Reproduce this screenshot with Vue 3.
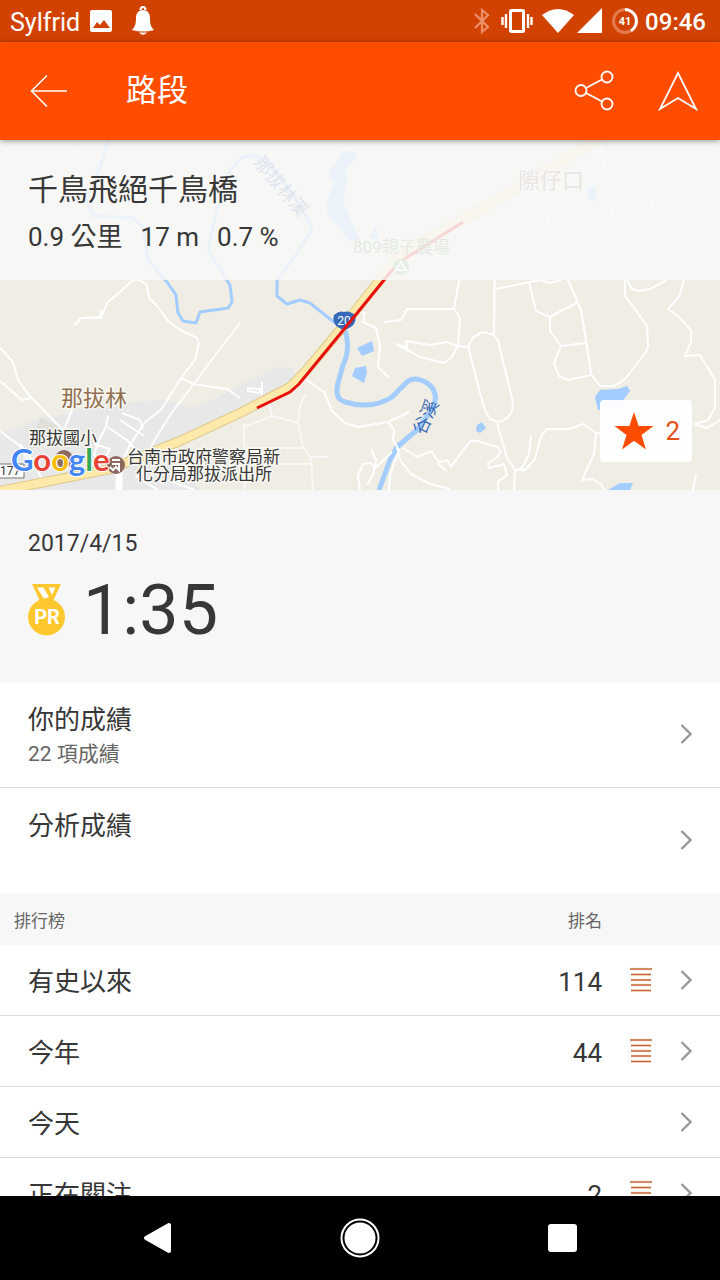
<script setup>
const leaderboard = [
  { name: '有史以來', rank: '114' },
  { name: '今年', rank: '44' },
  { name: '今天', rank: '' },
  { name: '正在關注', rank: '2' },
]

const results = [
  { title: '你的成績', note: '22 項成績' },
  { title: '分析成績', note: '' },
]

const roads = [
  'M78 322 L80 318 L101 318 L107 303 L121 291 L133 280 L140 280 L147 285 L149 298 L158 307 L168 321 L180 330 L197 338 L199 343 L195 360 L181 378 L161 410 L145 422 L130 445 L122 462',
  'M101 310 L100 317 L81 318 L75 325',
  'M0 348 L13 362 L18 380 L28 394 L60 427 L73 440',
  'M0 381 L22 400 L32 398',
  'M240 323 L213 358 L193 385 L170 415 L150 448 L143 462',
  'M181 378 L193 384 L227 389 L240 398',
  'M72 410 L62 434 L66 445',
  'M108 416 L106 427 L99 440 L94 455 L104 462',
  'M122 413 L140 420 L143 429',
  'M106 426 L128 441 L136 450',
  'M120 420 L144 436',
  'M94 444 L110 449 L104 460',
  'M20 444 L32 460 L45 485',
  'M0 431 L20 446 L33 470',
  'M136 476 L158 490',
  'M170 481 L195 490',
  'M304 378 L324 392 L332 411 L345 423 L358 427 L388 422 L409 412',
  'M388 422 L394 430 L393 440 L399 450 L390 475 L389 490',
  'M397 447 L400 460 L411 474 L430 484 L450 489',
  'M403 448 L417 457 L431 451 L439 462 L447 460 L451 467 L464 449 L471 441 L480 441',
  'M437 463 L447 471',
  'M371 449 L376 460 L373 475 L367 485',
  'M360 490 L358 476 L363 464 L371 463 L375 468 L392 452',
  'M360 311 L365 313 L363 322 L376 328 L380 346 L378 367 L389 378',
  'M384 322 L401 320 L407 309 L454 309 L460 318 L458 345 L452 357 L444 363 L420 357 L397 344 L407 348 L406 341 L430 345 L447 342 L458 346 L468 347 L473 337 L480 334',
  'M468 346 L480 393 L485 410 L490 419 L499 422 L506 419 L512 412 L513 402 L498 341 L494 335 L482 332 L472 338',
  'M396 344 L409 351',
  'M454 309 L459 281 L458 256',
  'M494 335 L495 245 L490 230 L483 216',
  'M496 289 L530 282 L540 280 L550 283 L561 280',
  'M529 282 L536 311 L550 317 L550 331 L561 346 L586 343',
  'M550 317 L578 302',
  'M568 280 L581 310 L587 346 L591 374 L600 386 L614 386 L625 379 L646 352 L648 346 L647 326 L637 312 L625 296 L625 280',
  'M627 280 L632 289 L638 291 L650 289 L667 280',
  'M684 280 L679 297 L668 309 L679 317 L691 330 L691 342 L685 356 L700 355 L715 380 L715 408 L708 420 L695 424 L707 428 L720 420',
  'M561 346 L554 363 L559 376 L568 380 L591 375',
  'M497 423 L507 458 L515 470 L525 470 L535 459 L541 436 L547 429 L570 429 L583 424 L596 433 L634 432 L652 412 L692 424',
  'M596 433 L594 454 L582 480 L592 479 L601 484 L604 490',
  'M515 470 L514 490',
  'M531 435 L529 454 L522 468 L515 470',
  'M480 442 L498 447 L501 452 L496 458 L488 463 L489 468 L504 464 L507 475 L498 482 L498 490',
  'M696 474 L693 490',
  'M0 175 L20 173 L60 165 L78 150',
  'M375 174 L397 172 L416 162 L445 165 L453 142',
  'M0 165 L12 142',
  'M493 155 L516 170 L535 190 L547 205 L577 202 L590 185 L605 175 L600 145',
  'M480 180 L515 168',
  'M547 205 L548 226 L560 222',
  'M593 202 L595 240 L600 250 L617 244',
  'M568 278 L600 252 L617 244',
  'M602 142 L610 200 L617 244 L627 280',
  'M612 200 L646 184 L655 180 L680 190 L694 203 L720 225',
  'M649 184 L654 222 L651 230 L660 250 L670 275',
  'M654 222 L677 233 L694 203',
  'M677 233 L697 255 L697 265 L684 280',
  'M617 226 L652 226',
  'M625 265 L660 250',
  'M610 145 L620 156 L647 154 L656 178 L680 180 L690 175 L720 172',
]

const lanes = [
  'M244 424 L245 490',
  'M244 427 L272 416 L298 423 L300 405 L306 394',
  'M272 416 L269 404',
  'M298 423 L303 447 L311 458 L313 490',
  'M245 448 L303 448',
  'M245 464 L311 464',
  'M311 457 L328 457',
]
</script>

<template>
  <div class="screen">
    <header class="status">
      <span class="carrier">Sylfrid</span>
      <svg class="picture" width="24" height="24" viewBox="0 0 24 24">
        <rect x="1" y="1" width="22" height="22" rx="2" fill="#fff" />
        <path d="M4 19 L8 13 L11 16 L15 11 L21 19 Z" fill="#d14200" />
      </svg>
      <svg class="bell" width="24" height="30" viewBox="0 0 24 30">
        <path d="M9.500 4 a2.500 3 0 0 1 5 0" fill="none" stroke="#fff" stroke-width="2" />
        <path d="M12 4 C7 4 5 8 5 12 C5 18 4 21 1 24 Q12 27 23 24 C20 21 19 18 19 12 C19 8 17 4 12 4 Z M8 26.500 H16 Q12 31 8 26.500 Z" fill="#fff" />
      </svg>
      <span class="grow"></span>
      <svg width="18" height="28" viewBox="0 0 18 28">
        <path d="M2 7 L15 20 L9 25 V3 L15 8 L2 21" fill="none" stroke="#ec9069" stroke-width="2.200" />
      </svg>
      <svg class="vibrate" width="32" height="26" viewBox="0 0 32 26">
        <rect x="9.500" y="2.500" width="13" height="21" rx="1" fill="none" stroke="#fff" stroke-width="3" />
        <path d="M5 6 V20 M27 6 V20 M1.500 9 V17 M30.500 9 V17" stroke="#fff" stroke-width="2.400" />
      </svg>
      <svg class="wifi" width="32" height="26" viewBox="0 0 32 26">
        <path d="M0 7 Q16 -5 32 7 L16 25 Z" fill="#fff" />
      </svg>
      <svg width="26" height="26" viewBox="0 0 26 26">
        <path d="M0 25 L25 0 V25 Z" fill="#fff" />
      </svg>
      <svg class="battery" width="28" height="28" viewBox="0 0 28 28">
        <circle cx="14" cy="14" r="11.500" fill="none" stroke="#e57a4d" stroke-width="3" />
        <path d="M14 2.500 A11.500 11.500 0 0 1 20 23.800" fill="none" stroke="#fff" stroke-width="3" />
        <text x="14" y="18" text-anchor="middle" fill="#fff" font-size="11" font-weight="700">41</text>
      </svg>
      <time class="clock">09:46</time>
    </header>

    <nav class="appbar">
      <button class="icon-button" type="button" aria-label="返回">
        <svg width="38" height="34" viewBox="0 0 38 34">
          <path d="M37 17 H1.500 M17 1.500 L1.500 17 L17 32.500" fill="none" stroke="#fff" stroke-width="1.500" />
        </svg>
      </button>
      <h1>路段</h1>
      <button class="icon-button" type="button" aria-label="分享">
        <svg width="40" height="42" viewBox="0 0 40 42" fill="none" stroke="#fff" stroke-width="1.800">
          <circle cx="7" cy="20.500" r="5.500" />
          <circle cx="33" cy="7" r="5.500" />
          <circle cx="33" cy="34" r="5.500" />
          <path d="M12 18 L28 9.500 M12 23 L28 31.500" />
        </svg>
      </button>
      <button class="icon-button" type="button" aria-label="導航">
        <svg width="40" height="42" viewBox="0 0 40 42">
          <path d="M20 3 L38 39 L20 28 L2 39 Z" fill="none" stroke="#fff" stroke-width="1.800" />
        </svg>
      </button>
    </nav>

    <main>
      <section class="map">
        <svg class="tiles" viewBox="0 140 720 350" preserveAspectRatio="xMidYMid slice">
          <rect y="140" width="720" height="350" fill="#efede4" />
          <path d="M0 432 L18 428 L40 417 L67 414 L93 402 L120 403 L167 400 L190 408 L213 400 L240 385 L277 367 L293 368 L297 378 L240 418 L170 450 L200 490 H0 Z" fill="#e8e8e8" />
          <path d="M40 417 L66 430 L62 443 L34 435 Z" fill="#e0e0d8" />
          <g fill="none" stroke="#f8f8f7" stroke-width="2" stroke-linejoin="round">
            <path v-for="d in lanes" :key="d" :d="d" />
          </g>
          <g fill="none" stroke="#a3ccff" stroke-linejoin="round">
            <path d="M108 140 L100 167 L86 200 L93 216 L133 218 L143 227 L148 260 L167 282 L176 295 L178 313 L183 321 L196 323 L200 312 L228 308 L232 302 L230 285 L208 250 L217 210 L230 170 L242 157 L256 155 L280 175 L303 210 L312 230 L297 253 L277 281 L277 296 L287 304 L300 300 L310 303 L335 323" stroke-width="3" />
            <path d="M345 330 Q351 349 343 365 L338 383 Q334 399 345 402 Q372 410 392 397 L408 381 Q416 376 427 383 Q440 392 433 408 L417 430 L397 447 L390 460 L379 490" stroke-width="5" />
          </g>
          <g fill="#a3ccff">
            <path d="M343 150 L357 153 L352 163 L346 168 L347 180 L343 203 L360 240 L350 242 L327 213 L327 200 L335 183 L328 173 L337 163 Z" />
            <path d="M369 238 L376 226 L379 240 Z" />
            <path d="M587 188 L595 186 L597 201 L588 200 Z" />
            <path d="M357 348 L372 341 L374 351 L362 356 Z M355 368 L366 366 L367 372 L364 383 L352 376 Z M477 425 L482 422 L486 428 L480 433 L476 431 Z M595 397 L600 390 L618 389 L627 386 L630 391 L622 402 L626 408 L598 410 Z M608 490 L620 483 L633 483 L630 490 Z" />
          </g>
          <g fill="none" stroke="#fff" stroke-width="2" stroke-linejoin="round">
            <path v-for="d in roads" :key="d" :d="d" />
            <path d="M248 388 L260 389 L260 393 L248 391 Z M262 382 V396" />
          </g>
          <path d="M119 468 V490" stroke="#fff" stroke-width="7" />
          <g fill="none" stroke-linejoin="round">
            <path d="M-6 492 L40 483 L110 469 L180 441 L240 413 L290 387 L305 372 L340 330 L379 281 L394 261 L423 241 L480 210 L600 138" stroke="#dfc98c" stroke-width="10" />
            <path d="M-6 492 L40 483 L110 469 L180 441 L240 413 L290 387 L305 372 L340 330 L379 281 L394 261 L423 241 L480 210 L600 138" stroke="#fde9a9" stroke-width="8" />
          </g>
          <path d="M334 315 Q339 310 344 312 Q349 310 355 315 Q358 326 344 330 Q331 326 334 315 Z" fill="#3569b8" />
          <text x="344" y="325" class="shield" text-anchor="middle">20</text>
          <path d="M257 408 L290 392 L299 384 L345 328 L384 280 L398 263 L463 222" fill="none" stroke="#e8100d" stroke-width="3" />
          <circle cx="401" cy="267" r="8" fill="#7bb573" />
          <path d="M401 262 L406 270 H396 Z" fill="none" stroke="#fff" stroke-width="2" />
          <text x="353" y="253" class="farm">809親子農場</text>
          <text x="518" y="188" class="label town">隙仔口</text>
          <text class="river" transform="translate(253 163) rotate(50)">那拔林溪</text>
          <text class="river" transform="translate(424 436) rotate(-65)">谷溪</text>
          <text x="61" y="406" class="label town">那拔林</text>
          <text x="29" y="444" class="label place">那拔國小</text>
          <path d="M-2 464 H24 V478 H-2 Z" fill="#fff" stroke="#777" />
          <text x="0" y="475" font-size="12" fill="#333">177</text>
          <circle cx="64" cy="459" r="9" fill="#8b6b60" />
          <circle cx="116" cy="465" r="9" fill="#8b6b60" />
          <path d="M112 460 H120 M112 464 H120 M110 467 L113 470 L116 467 L119 470 V465" fill="none" stroke="#fff" stroke-width="2" />
          <text x="127" y="463" class="label place">台南市政府警察局新</text>
          <text x="136" y="480" class="label place">化分局那拔派出所</text>
          <text x="11" y="471" class="google"><tspan fill="#4285f4">G</tspan><tspan fill="#ea4335">o</tspan><tspan fill="#fbbc05">o</tspan><tspan fill="#4285f4">g</tspan><tspan fill="#34a853">l</tspan><tspan fill="#ea4335">e</tspan></text>
        </svg>
        <div class="summary">
          <h2>千鳥飛絕千鳥橋</h2>
          <p><span>0.9 公里</span><span>17 m</span><span>0.7 %</span></p>
        </div>
        <button class="star" type="button" aria-label="收藏 2">
          <svg width="40" height="38" viewBox="0 0 40 38">
            <path d="M20 0 L24.600 14 H39.500 L27.500 23 L32 37.500 L20 28.700 L8 37.500 L12.500 23 L0.500 14 H15.400 Z" fill="#fc4c02" />
          </svg>
          <span>2</span>
        </button>
      </section>

      <section class="best">
        <time class="date">2017/4/15</time>
        <div class="record">
          <svg width="38" height="52" viewBox="0 0 38 52">
            <path d="M4 0 H33 L25 17 H12 Z" fill="#ffc72e" />
            <path d="M9 3.500 H15.500 L21 13 L16 15 Z M20.500 3.500 H27.500 L24 11 Z" fill="#fff" />
            <circle cx="18.500" cy="33" r="18.500" fill="#ffc72e" />
            <text x="19" y="40" text-anchor="middle" fill="#fff" font-size="20" font-weight="700">PR</text>
          </svg>
          <strong>1:35</strong>
        </div>
      </section>

      <a v-for="item in results" :key="item.title" class="result" href="#">
        <span class="result-text">
          <span class="name">{{ item.title }}</span>
          <span class="note">{{ item.note }}</span>
        </span>
        <svg class="chevron" width="12" height="20" viewBox="0 0 12 20">
          <path d="M1.500 1 L10.500 10 L1.500 19" fill="none" stroke="#999" stroke-width="2.400" />
        </svg>
      </a>

      <div class="board-head"><span>排行榜</span><span>排名</span></div>

      <a v-for="row in leaderboard" :key="row.name" class="board-row" href="#">
        <span class="name grow">{{ row.name }}</span>
        <template v-if="row.rank">
          <span class="rank">{{ row.rank }}</span>
          <svg width="22" height="26" viewBox="0 0 22 26">
            <path d="M0 2 H22 M1 7.500 H21 M1 13 H21 M1 18 H21 M1 23.500 H21" stroke="#fff0dc" stroke-width="3" />
            <path d="M0 2 H22 M1 7.500 H21 M1 13 H21 M1 18 H21 M1 23.500 H21" stroke="#c4663c" stroke-width="1.400" />
          </svg>
        </template>
        <svg class="chevron" width="12" height="20" viewBox="0 0 12 20">
          <path d="M1.500 1 L10.500 10 L1.500 19" fill="none" stroke="#999" stroke-width="2.400" />
        </svg>
      </a>
    </main>

    <footer class="system">
      <button class="icon-button" type="button" aria-label="上一頁">
        <svg width="40" height="40" viewBox="0 0 40 40">
          <path d="M8 20 L31 7 V33 Z" fill="#fff" stroke="#fff" stroke-width="4" stroke-linejoin="round" />
        </svg>
      </button>
      <button class="icon-button" type="button" aria-label="主畫面">
        <svg width="40" height="40" viewBox="0 0 40 40">
          <circle cx="20" cy="20" r="18.500" fill="none" stroke="#fff" stroke-width="2" />
          <circle cx="20" cy="20" r="15.500" fill="#fff" />
        </svg>
      </button>
      <button class="icon-button" type="button" aria-label="最近使用">
        <svg width="40" height="40" viewBox="0 0 40 40">
          <rect x="6" y="6" width="29" height="28" rx="3" fill="#fff" />
        </svg>
      </button>
    </footer>
  </div>
</template>

<style>
body {
  margin: 0;
  background: #fff;
}
</style>

<style scoped>
.screen {
  display: flex;
  flex-direction: column;
  height: 100vh;
  overflow: hidden;
  background: #fff;
  color: #373737;
  font-family: Roboto, "Noto Sans CJK TC", sans-serif;
}
.screen * {
  box-sizing: border-box;
}
svg {
  display: block;
  flex: none;
}
.grow {
  flex: 1;
}
.status {
  display: flex;
  align-items: center;
  flex: none;
  height: 42px;
  padding: 0 14px 0 10px;
  background: #d14200;
  color: #fff;
  font-size: 24px;
}
.carrier {
  padding-top: 2px;
  font-size: 25px;
}
.picture {
  margin-left: 9px;
}
.bell {
  margin-left: 18px;
}
.vibrate {
  margin-left: 10px;
}
.wifi {
  margin: 0 3px 0 9px;
}
.battery {
  margin: 0 6px 0 8px;
}
.clock {
  padding-top: 2px;
  font-weight: 500;
}
.appbar {
  display: flex;
  align-items: center;
  flex: none;
  position: relative;
  z-index: 1;
  gap: 44px;
  height: 98px;
  padding: 0 22px 0 30px;
  background: #ff4d00;
  box-shadow: 0 1px 6px rgba(0, 0, 0, 0.4);
}
.icon-button {
  padding: 0;
  border: 0;
  background: none;
}
h1 {
  flex: 1;
  margin: 0 0 0 14px;
  color: #fff;
  font-size: 31px;
  line-height: 44px;
  font-weight: 400;
}
main {
  flex: 1;
  min-height: 0;
  overflow: hidden;
}
.map {
  position: relative;
  height: 350px;
}
.tiles {
  width: 100%;
  height: 100%;
}
.label {
  paint-order: stroke;
  stroke: #f8f7f2;
  stroke-width: 3px;
  stroke-linejoin: round;
}
.place {
  font-size: 17px;
  fill: #373737;
}
.town {
  font-size: 22px;
  fill: #92704f;
}
.farm {
  font-size: 17px;
  fill: #629a58;
}
.river {
  font-size: 18px;
  fill: #3c6cb4;
}
.shield {
  font-size: 12px;
  fill: #fff;
}
.google {
  font-family: Lato, sans-serif;
  font-size: 31px;
  font-weight: 700;
  paint-order: stroke;
  stroke: #fff;
  stroke-width: 2px;
}
.summary {
  position: absolute;
  top: 0;
  left: 0;
  right: 0;
  padding: 29px 28px 25px;
  background: rgba(248, 248, 248, 0.86);
}
h2 {
  margin: 0;
  font-size: 30px;
  line-height: 42px;
  font-weight: 400;
}
.summary p {
  display: flex;
  gap: 18px;
  margin: 8px 0 0;
  font-size: 26px;
  line-height: 36px;
}
.star {
  display: flex;
  align-items: center;
  gap: 11px;
  position: absolute;
  right: 28px;
  bottom: 28px;
  height: 62px;
  padding: 0 12px 0 14px;
  border: 0;
  border-radius: 4px;
  background: rgba(255, 255, 255, 0.94);
  color: #e8501a;
  font-family: inherit;
  font-size: 26px;
}
.best {
  padding: 40px 28px 32px;
  background: #f7f7f7;
}
.date {
  display: block;
  font-size: 23px;
  line-height: 28px;
}
.record {
  display: flex;
  align-items: center;
  gap: 17px;
  margin-top: 12px;
}
.record strong {
  font-size: 70px;
  line-height: 80px;
  font-weight: 400;
}
a {
  color: inherit;
  text-decoration: none;
}
.result {
  display: flex;
  align-items: center;
  justify-content: space-between;
  padding: 18px 28px 19px;
}
.result + .result {
  border-top: 1px solid #dcdcdc;
}
.name {
  font-size: 26px;
  line-height: 40px;
}
.result-text {
  display: flex;
  flex-direction: column;
}
.note {
  min-height: 28px;
  color: #666;
  font-size: 21px;
  line-height: 28px;
}
.board-head {
  display: flex;
  justify-content: space-between;
  padding: 16px 118px 12px 14px;
  background: #f7f7f7;
  color: #666;
  font-size: 17px;
  line-height: 24px;
}
.board-row {
  display: flex;
  align-items: center;
  gap: 28px;
  height: 71px;
  padding: 0 28px;
  border-bottom: 1px solid #dcdcdc;
}
.board-row .name,
.rank {
  padding-top: 4px;
}
.rank {
  font-size: 26px;
  line-height: 40px;
}
.system {
  display: flex;
  align-items: center;
  justify-content: space-around;
  flex: none;
  height: 84px;
  padding: 0 8%;
  background: #000;
}
</style>
